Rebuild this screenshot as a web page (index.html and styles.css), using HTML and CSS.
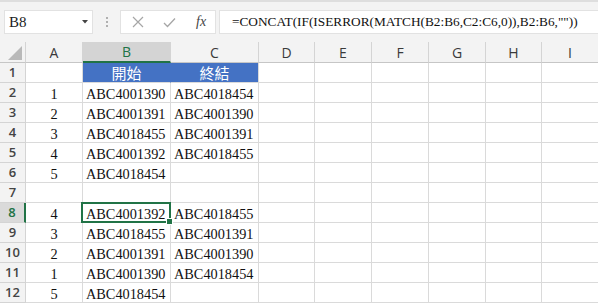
FILE: index.html
```html
<!DOCTYPE html>
<html lang="zh-Hant">
<head>
    <meta charset="UTF-8">
    <title>CONCAT</title>
    <link rel="stylesheet" href="styles.css">
</head>
<body>
    <div class="formula-bar">
        <div class="name-box">
            <span class="name">B8</span>
            <svg class="caret" width="6" height="4" viewBox="0 0 6 4"><polygon points="0,0 6,0 3,3.5" fill="#444"/></svg>
        </div>
        <svg class="grip" width="4" height="12" viewBox="0 0 4 12">
            <circle cx="2" cy="2" r="1" fill="#9a9a9a"/>
            <circle cx="2" cy="6" r="1" fill="#9a9a9a"/>
            <circle cx="2" cy="10" r="1" fill="#9a9a9a"/>
        </svg>
        <div class="fx-buttons">
            <svg width="12" height="12" viewBox="0 0 12 12"><path d="M1 1L11 11M11 1L1 11" stroke="#a6a6a6" stroke-width="1.2" fill="none"/></svg>
            <svg width="13" height="11" viewBox="0 0 13 11"><path d="M1 6L4.5 9.5L12 1.5" stroke="#a6a6a6" stroke-width="1.3" fill="none"/></svg>
            <span class="fx">fx</span>
        </div>
        <div class="formula">=CONCAT(IF(ISERROR(MATCH(B2:B6,C2:C6,0)),B2:B6,""))</div>
    </div>

    <div class="sheet">
        <div class="corner">
            <svg width="26" height="21" viewBox="0 0 26 21"><polygon points="22,4 22,18 8,18" fill="#b9b9b9"/></svg>
        </div>
        <div class="col-head">A</div>
        <div class="col-head active">B</div>
        <div class="col-head">C</div>
        <div class="col-head">D</div>
        <div class="col-head">E</div>
        <div class="col-head">F</div>
        <div class="col-head">G</div>
        <div class="col-head">H</div>
        <div class="col-head">I</div>

        <div class="row-head">1</div>
        <div class="cell"></div>
        <div class="cell title joined">開始</div>
        <div class="cell title">終結</div>
        <div class="cell"></div><div class="cell"></div><div class="cell"></div><div class="cell"></div><div class="cell"></div><div class="cell"></div>

        <div class="row-head">2</div>
        <div class="cell num">1</div>
        <div class="cell">ABC4001390</div>
        <div class="cell">ABC4018454</div>
        <div class="cell"></div><div class="cell"></div><div class="cell"></div><div class="cell"></div><div class="cell"></div><div class="cell"></div>

        <div class="row-head">3</div>
        <div class="cell num">2</div>
        <div class="cell">ABC4001391</div>
        <div class="cell">ABC4001390</div>
        <div class="cell"></div><div class="cell"></div><div class="cell"></div><div class="cell"></div><div class="cell"></div><div class="cell"></div>

        <div class="row-head">4</div>
        <div class="cell num">3</div>
        <div class="cell">ABC4018455</div>
        <div class="cell">ABC4001391</div>
        <div class="cell"></div><div class="cell"></div><div class="cell"></div><div class="cell"></div><div class="cell"></div><div class="cell"></div>

        <div class="row-head">5</div>
        <div class="cell num">4</div>
        <div class="cell">ABC4001392</div>
        <div class="cell">ABC4018455</div>
        <div class="cell"></div><div class="cell"></div><div class="cell"></div><div class="cell"></div><div class="cell"></div><div class="cell"></div>

        <div class="row-head">6</div>
        <div class="cell num">5</div>
        <div class="cell">ABC4018454</div>
        <div class="cell"></div>
        <div class="cell"></div><div class="cell"></div><div class="cell"></div><div class="cell"></div><div class="cell"></div><div class="cell"></div>

        <div class="row-head">7</div>
        <div class="cell"></div>
        <div class="cell"></div>
        <div class="cell"></div>
        <div class="cell"></div><div class="cell"></div><div class="cell"></div><div class="cell"></div><div class="cell"></div><div class="cell"></div>

        <div class="row-head active">8</div>
        <div class="cell num">4</div>
        <div class="cell selected">ABC4001392</div>
        <div class="cell">ABC4018455</div>
        <div class="cell"></div><div class="cell"></div><div class="cell"></div><div class="cell"></div><div class="cell"></div><div class="cell"></div>

        <div class="row-head">9</div>
        <div class="cell num">3</div>
        <div class="cell">ABC4018455</div>
        <div class="cell">ABC4001391</div>
        <div class="cell"></div><div class="cell"></div><div class="cell"></div><div class="cell"></div><div class="cell"></div><div class="cell"></div>

        <div class="row-head">10</div>
        <div class="cell num">2</div>
        <div class="cell">ABC4001391</div>
        <div class="cell">ABC4001390</div>
        <div class="cell"></div><div class="cell"></div><div class="cell"></div><div class="cell"></div><div class="cell"></div><div class="cell"></div>

        <div class="row-head">11</div>
        <div class="cell num">1</div>
        <div class="cell">ABC4001390</div>
        <div class="cell">ABC4018454</div>
        <div class="cell"></div><div class="cell"></div><div class="cell"></div><div class="cell"></div><div class="cell"></div><div class="cell"></div>

        <div class="row-head">12</div>
        <div class="cell num">5</div>
        <div class="cell">ABC4018454</div>
        <div class="cell"></div>
        <div class="cell"></div><div class="cell"></div><div class="cell"></div><div class="cell"></div><div class="cell"></div><div class="cell"></div>
    </div>
</body>
</html>
```

FILE: styles.css
```css
body {
    margin: 0;
    width: 598px;
    height: 304px;
    overflow: hidden;
    background: #fff;
    font-family: "Liberation Serif", "Times New Roman", serif;
}
.formula-bar {
    height: 42px;
    box-sizing: border-box;
    padding-top: 10px;
    background: #f3f3f3;
    box-shadow: inset 0 2px 0 #dedede;
    display: flex;
    align-items: flex-start;
}
.name-box, .fx-buttons, .formula {
    height: 24px;
    box-sizing: border-box;
    background: #fff;
    border: 1px solid #e2e2e2;
}
.name-box {
    margin-left: 4px;
    width: 89px;
    display: flex;
    align-items: center;
    justify-content: space-between;
    padding: 0 4px 0 4px;
}
.name {
    font-family: "Liberation Serif", "Times New Roman", serif;
    font-size: 15px;
    color: #222;
}
.grip {
    margin: 6px 11px 0 12px;
}
.fx-buttons {
    margin-left: 0;
    width: 96px;
    display: flex;
    align-items: center;
    padding-left: 11px;
    gap: 19px;
}
.fx {
    font-style: italic;
    font-size: 14px;
    color: #444;
    margin-left: 1px;
}
.formula {
    margin-left: 3px;
    flex: 1;
    border-right: none;
    padding-left: 12px;
    font-size: 13.3px;
    line-height: 22px;
    color: #111;
    white-space: nowrap;
}

.sheet {
    display: grid;
    grid-template-columns: 26px 57px 88px 88px 56px 57px 57px 57px 56px 57px;
    grid-template-rows: 21px repeat(12, 20px);
}
.corner, .col-head, .row-head {
    box-sizing: border-box;
    background: #f3f3f3;
    border-right: 1px solid #d4d4d4;
    border-bottom: 1px solid #c6c6c6;
    font-family: "Open Sans", "Noto Sans", sans-serif;
    color: #3a3a3a;
}
.corner svg {
    display: block;
}
.col-head {
    font-size: 14px;
    line-height: 21px;
    text-align: center;
}
.col-head.active {
    background: #d4d4d4;
    color: #217346;
    border-bottom: 2px solid #217346;
    line-height: 19px;
}
.row-head {
    font-size: 13px;
    font-weight: 600;
    line-height: 19px;
    text-align: center;
    color: #444;
    border-bottom-color: #d4d4d4;
}
.row-head.active {
    background: #dadada;
    color: #217346;
    border-right: 2px solid #217346;
}
.cell {
    box-sizing: border-box;
    border-right: 1px solid #dadada;
    border-bottom: 1px solid #dadada;
    padding: 0 3px;
    font-size: 14.3px;
    line-height: 23px;
    color: #111;
    white-space: nowrap;
}
.cell.num {
    text-align: center;
}
.cell.title {
    background: #4472c4;
    color: #fff;
    text-align: center;
    font-family: "Noto Sans CJK TC", "Noto Sans CJK SC", sans-serif;
    font-size: 15px;
    line-height: 19px;
}
.cell.joined {
    border-right-color: #4472c4;
}
.cell.selected {
    position: relative;
}
.cell.selected::after {
    content: "";
    position: absolute;
    left: -2px;
    top: -1px;
    right: -1px;
    bottom: -1px;
    border: 2px solid #217346;
}
.cell.selected::before {
    content: "";
    position: absolute;
    right: -3px;
    bottom: -3px;
    width: 5px;
    height: 5px;
    background: #217346;
    border: 1px solid #fff;
    z-index: 1;
}
```
